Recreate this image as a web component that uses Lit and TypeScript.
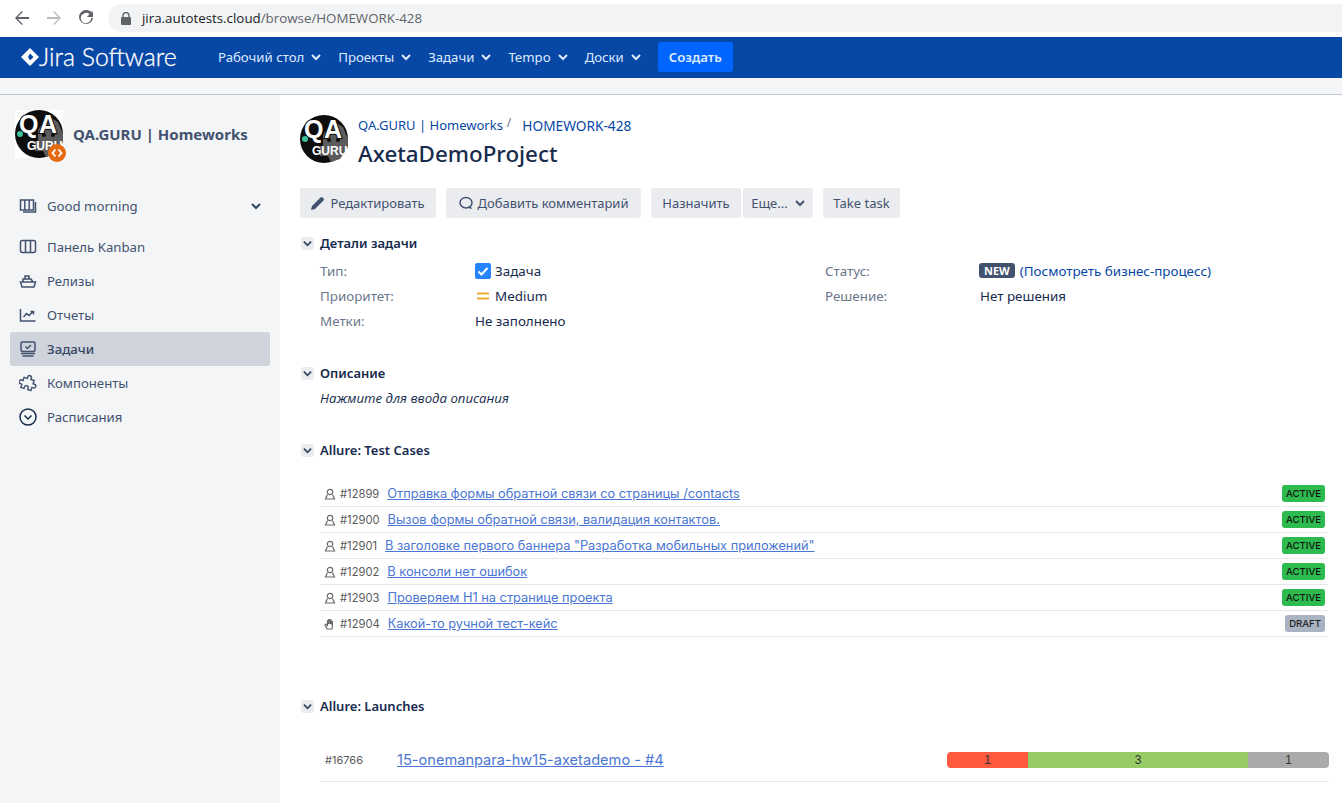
import {LitElement, html, css, svg} from 'lit';
import {customElement} from 'lit/decorators.js';

const chevron = (cls = 'chev') => html`<svg class=${cls} viewBox="0 0 10 10"><polyline points="1,3 5,7 9,3" fill="none" stroke="currentColor" stroke-width="2"/></svg>`;

const navIcons: Record<string, unknown> = {
  board: svg`<rect x="1.5" y="2.5" width="15" height="12" rx="2" /><path d="M6.5 2.5v12M11.5 2.5v12"/>`,
  ship: svg`<path d="M1.5 10h15l-1.5 5H3zM4 10V7h8l2 3M6 7V4h4v3"/>`,
  chart: svg`<path d="M1.5 3v12h15"/><path d="M4.5 11l3-3.5 2.5 2 4-4M11.5 5.500h3v3"/>`,
  tasks: svg`<rect x="2" y="2" width="14" height="9.5" rx="1.5"/><path d="M6.5 6.500l2 2 3.500-3.500M2 13.500h14M3.500 16h11"/>`,
  puzzle: svg`<path d="M7 3.500a2 2 0 0 1 4 0V5h3.500v3.500H16a2 2 0 0 1 0 4h-1.500V16H11v-1.500a2 2 0 0 0-4 0V16H3.500v-3.500H2a2 2 0 0 1 0-4h1.500V5H7z" transform="rotate(18 9 9.5) scale(.96)"/>`,
  clock: svg`<circle cx="9" cy="9" r="8" stroke="#172b4d"/><path d="M5.500 7.500L9 11l3.500-3.500" stroke="#172b4d"/>`,
};

const logo = (cls: string) => html`
  <svg class=${cls} viewBox="0 0 48 48">
    <circle cx="24" cy="24" r="24" fill="#0d0d0d"/>
    <path d="M23 20L33 6l10 6 5 12v8L40 44l-9 3-3-6H20V31h3z" fill="#5c5c5c"/>
    <g font-family="Liberation Sans" font-weight="700" fill="#fff" stroke="#0d0d0d" stroke-width="2" paint-order="stroke">
      <text x="4" y="23" font-size="25">Q</text>
      <text x="24" y="23" font-size="25">A</text>
    </g>
    <circle cx="5" cy="24" r="3" fill="#3fbf9b"/>
    <circle cx="29" cy="25" r="2" fill="#0d0d0d"/>
    <circle cx="38" cy="25" r="2" fill="#0d0d0d"/>
    <text x="12" y="40" font-family="Liberation Sans" font-weight="700" font-size="12" fill="#fff">GURU</text>
  </svg>`;

const testCases = [
  {id: '#12899', title: 'Отправка формы обратной связи со страницы /contacts', status: 'ACTIVE'},
  {id: '#12900', title: 'Вызов формы обратной связи, валидация контактов.', status: 'ACTIVE'},
  {id: '#12901', title: 'В заголовке первого баннера "Разработка мобильных приложений"', status: 'ACTIVE'},
  {id: '#12902', title: 'В консоли нет ошибок', status: 'ACTIVE'},
  {id: '#12903', title: 'Проверяем H1 на странице проекта', status: 'ACTIVE'},
  {id: '#12904', title: 'Какой-то ручной тест-кейс', status: 'DRAFT', manual: true},
];

const launchStats = [
  {n: 1, w: 81, color: '#fd5a3e'},
  {n: 3, w: 220, color: '#97cc64'},
  {n: 1, w: 81, color: '#aaaaaa'},
];

const navItems = [
  {icon: 'board', label: 'Панель Kanban'},
  {icon: 'ship', label: 'Релизы'},
  {icon: 'chart', label: 'Отчеты'},
  {icon: 'tasks', label: 'Задачи', active: true},
  {icon: 'puzzle', label: 'Компоненты'},
  {icon: 'clock', label: 'Расписания'},
];

@customElement('app-root')
export class AppRoot extends LitElement {
  static styles = css`
    :host {
      display: block;
      width: 1342px;
      height: 803px;
      overflow: hidden;
      background: #fff;
      font-family: "Noto Sans", sans-serif;
      font-size: 13.2px;
      color: #172b4d;
    }

    /* browser chrome */
    .chrome {
      height: 37px;
      box-sizing: border-box;
      padding: 4px 0 5px 14px;
      display: flex;
      align-items: center;
      background: #fff;
    }
    .chrome-btn {
      width: 16px;
      height: 16px;
      margin-right: 16px;
      color: #5f6368;
      flex: none;
    }
    .chrome-btn.off { color: #babcbe; }
    .url {
      flex: 1;
      height: 28px;
      margin-left: -2px;
      padding-left: 13px;
      border-radius: 14px 0 0 14px;
      background: #f1f3f4;
      display: flex;
      align-items: center;
      gap: 11px;
      font-family: "Open Sans", sans-serif;
      font-size: 13.33px;
      color: #5f6368;
    }
    .url b { font-weight: 400; color: #202124; }
    .lock { width: 10px; height: 13px; color: #5f6368; }

    /* jira top bar */
    .topbar {
      height: 41px;
      box-sizing: border-box;
      padding: 0 0 2px 21px;
      background: #0747a6;
      color: #deebff;
      display: flex;
      align-items: center;
    }
    .brand {
      display: flex;
      align-items: center;
      gap: 0;
      width: 197px;
      font-family: Lato, sans-serif;
      font-size: 24.8px;
      font-weight: 300;
      color: #fff;
      -webkit-text-stroke: 0.3px #fff;
    }
    .brand svg { width: 18px; height: 18px; }
    .menu {
      display: flex;
      align-items: center;
      gap: 7px;
      margin-right: 17px;
      white-space: nowrap;
    }
    .chev { width: 10px; height: 10px; flex: none; }
    .create {
      height: 30px;
      width: 75px;
      display: flex;
      align-items: center;
      justify-content: center;
      border-radius: 3px;
      background: #0065ff;
      color: #deebff;
      font-weight: 600;
      margin-bottom: -1px;
    }
    .strip {
      height: 16px;
      background: #f4f5f7;
      border-bottom: 1px solid #c1c7d0;
    }

    /* page */
    .page { display: flex; height: 708px; }
    .sidebar {
      width: 280px;
      flex: none;
      box-sizing: border-box;
      background: #f4f5f7;
      padding: 15px 10px 0;
    }
    .project { display: flex; align-items: center; padding-left: 5px; position: relative; height: 48px; }
    .project-logo { width: 48px; height: 48px; flex: none; background: #fff; }
    .project-name {
      margin: 0 0 0 10px;
      font-size: 15px;
      font-weight: 700;
      color: #42526e;
      white-space: nowrap;
    }
    .dev-badge {
      position: absolute;
      left: 38px;
      top: 34px;
      width: 18px;
      height: 18px;
      border-radius: 50%;
      background: #e56910;
      color: #fff;
    }
    .scope {
      height: 34px;
      box-sizing: border-box;
      margin-top: 31px;
      margin-bottom: 7px;
      padding: 0 9px;
      display: flex;
      align-items: center;
      color: #42526e;
    }
    .scope .chev { color: #344563; }
    .nav-item {
      height: 34px;
      box-sizing: border-box;
      display: flex;
      align-items: center;
      border-radius: 3px;
      color: #42526e;
      padding-left: 9px;
    }
    .nav-item.active { background: #cfd3dc; color: #344563; font-weight: 500; }
    .nav-icon {
      width: 18px;
      height: 18px;
      margin-right: 10px;
      flex: none;
      fill: none;
      stroke: #42526e;
      stroke-width: 1.5;
    }
    .grow { flex: 1; }

    .main { flex: 1; padding: 20px 0 0 20px; min-width: 0; }
    .issue-head { display: flex; gap: 10px; height: 48px; }
    .issue-logo { width: 48px; height: 48px; flex: none; }
    .crumbs {
      display: flex;
      align-items: center;
      height: 20px;
      color: #0747a6;
      font-size: 13px;
    }
    .crumbs i { font-style: normal; color: #6b778c; font-size: 12px; margin: -6px 11px 0 4px; }
    .crumbs .key { font-size: 13.7px; }
    h1 {
      margin: 5px 0 0;
      font-size: 22.4px;
      line-height: 28px;
      font-weight: 500;
      color: #172b4d;
    }
    .toolbar { display: flex; margin-top: 25px; }
    .btn {
      height: 30px;
      box-sizing: border-box;
      padding-bottom: 1px;
      display: flex;
      align-items: center;
      justify-content: center;
      flex: none;
      gap: 5px;
      border-radius: 3px;
      background: #ebecf0;
      color: #42526e;
      font-size: 13px;
      margin-right: 10px;
    }
    .btn svg.ico { width: 14px; height: 14px; }

    .module-head {
      display: flex;
      align-items: center;
      height: 20px;
      font-weight: 600;
      font-size: 13px;
      color: #172b4d;
    }
    .twist {
      width: 13px;
      height: 13px;
      margin: 0 6px 0 1px;
      border-radius: 3px;
      background: #ebecf0;
      display: flex;
      align-items: center;
      justify-content: center;
      color: #344563;
    }
    .twist .chev { width: 9px; height: 9px; }
    .details { margin-top: 15px; }
    .detail-grid {
      display: grid;
      grid-template-columns: 155px 350px 155px 1fr;
      grid-auto-rows: 25px;
      margin: 6px 0 0 20px;
      align-items: center;
      font-size: 13.4px;
    }
    .detail-grid > div { padding-bottom: 2px; }
    .detail-grid .k { color: #6b778c; }
    .detail-grid .v { color: #172b4d; display: flex; align-items: center; }
    .detail-grid a, .crumbs a { color: #0747a6; text-decoration: none; }
    .type-ico { width: 16px; height: 16px; margin-right: 4px; }
    .lozenge {
      margin: 0 5px 0 -1px;
      height: 15px;
      padding: 0 5px;
      display: flex;
      align-items: center;
      border-radius: 3px;
      background: #42526e;
      color: #fff;
      font-size: 11px;
      font-weight: 700;
    }
    .descr { margin-top: 29px; }
    .descr p {
      margin: 5px 0 0 20px;
      height: 20px;
      line-height: 20px;
      font-family: "Open Sans", sans-serif;
      font-style: italic;
      font-size: 13.2px;
      color: #172b4d;
    }
    .cases-sec { margin-top: 32px; }
    .cases { margin: 21px 14px 0 20px; font-family: Inter, sans-serif; }
    .case {
      height: 26px;
      box-sizing: border-box;
      display: flex;
      align-items: center;
      border-bottom: 1px solid #e6e8eb;
      font-size: 11.2px;
      color: #5b5b5b;
      padding-left: 4px;
    }
    .case svg { width: 12px; height: 12px; margin-right: 4px; flex: none; fill: none; stroke: #6b6b6b; stroke-width: 1.2; }
    .case .id { margin-right: 8px; }
    .case a, .launch a { color: #4a76d4; text-decoration: underline; }
    .case a { font-size: 12.8px; }
    .status {
      margin: 0 3px 0 auto;
      height: 17px;
      padding: 0 4px;
      display: flex;
      align-items: center;
      border-radius: 3px;
      font-size: 9.6px;
      font-weight: 500;
      color: #111;
      background: #2dba4e;
    }
    .status.draft { background: #a9b3c1; color: #222; }
    .launches-sec { margin-top: 59px; }
    .launch {
      margin: 22px 13px 0 20px;
      height: 44px;
      box-sizing: border-box;
      padding-left: 5px;
      display: flex;
      align-items: center;
      border-bottom: 1px solid #e6e8eb;
      font-family: Inter, sans-serif;
      color: #5b5b5b;
      font-size: 11px;
    }
    .launch .id { width: 72px; }
    .launch a { font-size: 14.6px; }
    .bar {
      margin-left: auto;
      display: flex;
      height: 16px;
      border-radius: 4px;
      overflow: hidden;
      font-family: "Liberation Sans", sans-serif;
      font-size: 12px;
      color: #333;
    }
    .bar div { display: flex; align-items: center; justify-content: center; }
  `;

  render() {
    return html`
      <div class="chrome">
        <svg class="chrome-btn" viewBox="0 0 16 16"><path d="M15 7H3.800l5-5L7.800 1 1 8l6.800 7 1-1-5-5H15z" fill="currentColor"/></svg>
        <svg class="chrome-btn off" viewBox="0 0 16 16"><path d="M1 7h11.200l-5-5 1-1L15 8l-6.800 7-1-1 5-5H1z" fill="currentColor"/></svg>
        <svg class="chrome-btn" viewBox="0 0 16 16"><path d="M13.600 3.400V.8l-1 .8A7 7 0 1 0 15 8h-1.800a5.200 5.200 0 1 1-1.700-3.800L8.800 7H15V.8z" fill="currentColor"/></svg>
        <div class="url">
          <svg class="lock" viewBox="0 0 10 13"><path d="M2 5.500V3.500a3 3 0 0 1 6 0v2" fill="none" stroke="currentColor" stroke-width="1.400"/><rect y="5" width="10" height="8" rx="1" fill="currentColor"/></svg>
          <span><b>jira.autotests.cloud</b>/browse/HOMEWORK-428</span>
        </div>
      </div>

      <div class="topbar">
        <div class="brand">
          <svg viewBox="0 0 18 18"><path d="M9 0l9 9-9 9-9-9z" fill="#fff"/><path d="M9 5.500L12.500 9 9 12.500 7 9z" fill="#0747a6"/></svg>
          Jira Software
        </div>
        ${['Рабочий стол', 'Проекты', 'Задачи', 'Tempo', 'Доски'].map(m => html`<div class="menu">${m} ${chevron()}</div>`)}
        <div class="create">Создать</div>
      </div>
      <div class="strip"></div>

      <div class="page">
        <aside class="sidebar">
          <div class="project">
            ${logo('project-logo')}
            <svg class="dev-badge" viewBox="0 0 18 18"><path d="M7.500 5.500L4.500 9l3 3.500M10.500 5.500l3 3.500-3 3.500" fill="none" stroke="currentColor" stroke-width="1.800"/></svg>
            <h2 class="project-name">QA.GURU | Homeworks</h2>
          </div>
          <div class="scope">
            <svg class="nav-icon" viewBox="0 0 18 18"><path d="M1.500 3h13v10h-13zM5.800 3v10M10.200 3v10M16.500 5v10H4"/></svg>
            Good morning
            <span class="grow"></span>
            ${chevron()}
          </div>
          ${navItems.map(item => html`
            <div class="nav-item ${item.active ? 'active' : ''}">
              <svg class="nav-icon" viewBox="0 0 18 18">${navIcons[item.icon]}</svg>
              ${item.label}
            </div>
          `)}
        </aside>

        <main class="main">
          <div class="issue-head">
            ${logo('issue-logo')}
            <div>
              <div class="crumbs"><a>QA.GURU | Homeworks</a><i>/</i><a class="key">HOMEWORK-428</a></div>
              <h1>AxetaDemoProject</h1>
            </div>
          </div>

          <div class="toolbar">
            <div class="btn" style="width:136px">
              <svg class="ico" viewBox="0 0 14 14"><path d="M0 14l1-4L9.500 1.500a1.500 1.500 0 0 1 2 0l1 1a1.500 1.500 0 0 1 0 2L4 13z" fill="#42526e"/></svg>
              Редактировать
            </div>
            <div class="btn" style="width:195px">
              <svg class="ico" viewBox="0 0 14 14"><path d="M7 1.500c3.300 0 6 2.200 6 5.200s-2.700 5.200-6 5.200c-3.300 0-6-2.200-6-5.200s2.700-5.200 6-5.200zM10 11l2.500 1.500" fill="none" stroke="#42526e" stroke-width="1.500"/></svg>
              Добавить комментарий
            </div>
            <div class="btn" style="width:90px;margin-right:2px">Назначить</div>
            <div class="btn" style="width:70px;gap:7px">Еще... ${chevron()}</div>
            <div class="btn" style="width:77px">Take task</div>
          </div>

          <section class="details">
            <div class="module-head"><span class="twist">${chevron()}</span>Детали задачи</div>
            <div class="detail-grid">
              <div class="k">Тип:</div>
              <div class="v">
                <svg class="type-ico" viewBox="0 0 16 16"><rect width="16" height="16" rx="2" fill="#2684ff"/><path d="M3.500 8.500L6.500 11.500 12.500 5" fill="none" stroke="#fff" stroke-width="2"/></svg>
                Задача
              </div>
              <div class="k">Статус:</div>
              <div class="v"><span class="lozenge">NEW</span><a>(Посмотреть бизнес-процесс)</a></div>
              <div class="k">Приоритет:</div>
              <div class="v">
                <svg class="type-ico" viewBox="0 0 16 16"><path d="M2 5.500h12M2 10.500h12" stroke="#e8ab2e" stroke-width="2"/></svg>
                Medium
              </div>
              <div class="k">Решение:</div>
              <div class="v">Нет решения</div>
              <div class="k">Метки:</div>
              <div class="v">Не заполнено</div>
            </div>
          </section>

          <section class="descr">
            <div class="module-head"><span class="twist">${chevron()}</span>Описание</div>
            <p>Нажмите для ввода описания</p>
          </section>

          <section class="cases-sec">
            <div class="module-head"><span class="twist">${chevron()}</span>Allure: Test Cases</div>
            <div class="cases">
              ${testCases.map(tc => html`
                <div class="case">
                  ${tc.manual
                    ? html`<svg viewBox="0 0 12 12"><path d="M3 11L1 7l1-1 1.500 1.500V2.500h1.200V6V1.500h1.300V6V2h1.200v4.500V3.500h1.200v5L8 11z"/></svg>`
                    : html`<svg viewBox="0 0 12 12"><circle cx="6" cy="4" r="2.700"/><path d="M3.500 6.500L1.500 11h9l-2-4.500"/></svg>`}
                  <span class="id">${tc.id}</span>
                  <a>${tc.title}</a>
                  <span class="status ${tc.status === 'DRAFT' ? 'draft' : ''}">${tc.status}</span>
                </div>
              `)}
            </div>
          </section>

          <section class="launches-sec">
            <div class="module-head"><span class="twist">${chevron()}</span>Allure: Launches</div>
            <div class="launch">
              <span class="id">#16766</span>
              <a>15-onemanpara-hw15-axetademo - #4</a>
              <div class="bar">
                ${launchStats.map(s => html`<div style="width:${s.w}px;background:${s.color}">${s.n}</div>`)}
              </div>
            </div>
          </section>
        </main>
      </div>
    `;
  }
}
